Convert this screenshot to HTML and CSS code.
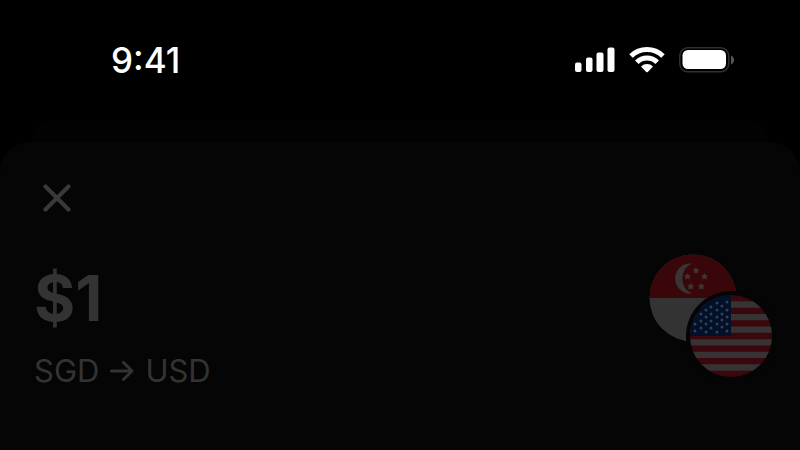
FILE: index.html
```
<!DOCTYPE html>
<html lang="en">

<head>
  <meta charset="UTF-8" />
  <title>Convert SGD to USD</title>
  <meta name="viewport" content="width=device-width, initial-scale=1.0" />
  <link rel="stylesheet" href="styles.css">
</head>

<body>
  <!-- Status bar -->
  <header class="statusbar">
    <time class="clock">9:41</time>
    <div class="indicators">
      <svg width="40" height="26" viewBox="0 0 40 26" fill="#fff" aria-label="Signal">
        <rect x="0" y="15.500" width="6.5" height="9.5" rx="2" />
        <rect x="11" y="10.500" width="6.5" height="14.5" rx="2" />
        <rect x="21.5" y="5.500" width="7" height="19.5" rx="2" />
        <rect x="32.5" y="0.500" width="7" height="24.5" rx="2" />
      </svg>
      <svg width="36" height="26" viewBox="0 0 36 26" fill="none" stroke="#fff" stroke-width="5" aria-label="Wi-Fi">
        <path d="M2 9 A23 23 0 0 1 34 9" />
        <path d="M7.8 15.2 A14.6 14.6 0 0 1 28.2 15.2" />
        <path d="M12 19.4 A8.6 8.6 0 0 1 24 19.4 L18.8 25 Q18 25.6 17.2 25 Z" fill="#fff" stroke="none" />
      </svg>
      <svg width="56" height="26" viewBox="0 0 56 26" aria-label="Battery">
        <rect x="0.75" y="0.75" width="49" height="24" rx="8" fill="none" stroke="#303030" stroke-width="1.5" />
        <rect x="3.5" y="3" width="43.5" height="19" rx="5.5" fill="#fff" />
        <path d="M52 8.5 Q55 10 55 13 Q55 16 52 17.5 Z" fill="#555" />
      </svg>
    </div>
  </header>

  <!-- Sheets -->
  <div class="sheet-back"></div>
  <main class="sheet">
    <button class="close" type="button" aria-label="Close">
      <svg width="28" height="28" viewBox="0 0 28 28" stroke="#393939" stroke-width="4.2" stroke-linecap="round">
        <path d="M2.5 2.5 L25.5 25.5 M25.5 2.5 L2.5 25.5" />
      </svg>
    </button>

    <div class="summary">
      <div>
        <h1>$1</h1>
        <p class="pair">
          SGD
          <svg width="24" height="20" viewBox="0 0 24 20" fill="none" stroke="#333" stroke-width="3" stroke-linecap="round" stroke-linejoin="round" role="img" aria-label="to">
            <path d="M1.5 10 H22 M13.5 1.5 L22 10 L13.5 18.5" />
          </svg>
          USD
        </p>
      </div>

      <div class="flags">
        <svg class="flag-sg" viewBox="0 0 88 88" role="img" aria-label="Singapore">
          <clipPath id="sg"><circle cx="44" cy="44" r="43.5" /></clipPath>
          <g clip-path="url(#sg)">
            <rect width="88" height="88" fill="#333" />
            <rect width="88" height="44" fill="#39070a" />
            <path d="M43 9.5 A15.1 15.1 0 1 0 43 39.5 A16.5 16.5 0 0 1 43 9.5 Z" fill="#3a3535" />
            <g fill="#3d3434">
              <path id="star" d="M47 13 l1.2 2 l2.3 .4 l-1.6 1.7 l.4 2.4 l-2.3 -1.1 l-2.3 1.1 l.4 -2.4 l-1.6 -1.7 l2.3 -.4 Z" />
              <use href="#star" x="-8.5" y="6" />
              <use href="#star" x="8.5" y="6" />
              <use href="#star" x="-5.3" y="16" />
              <use href="#star" x="5.3" y="16" />
            </g>
          </g>
        </svg>
        <svg class="flag-us" viewBox="0 0 90 90" role="img" aria-label="United States">
          <clipPath id="us"><circle cx="45" cy="45" r="41" /></clipPath>
          <circle cx="45" cy="45" r="45" fill="#050505" />
          <g clip-path="url(#us)">
            <rect width="90" height="90" fill="#39070c" />
            <path d="M0 13.5 H90 M0 26.1 H90 M0 38.7 H90 M0 51.3 H90 M0 63.9 H90 M0 76.5 H90" stroke="#353333" stroke-width="6.3" />
            <rect width="45" height="45" fill="#021029" />
            <g fill="#354052">
              <circle cx="41" cy="11" r="1.5" /><circle cx="41" cy="19" r="1.5" />
              <circle cx="41" cy="26" r="1.5" /><circle cx="41" cy="33" r="1.5" />
              <circle cx="41" cy="40" r="1.5" /><circle cx="36" cy="15" r="1.5" />
              <circle cx="36" cy="23" r="1.5" /><circle cx="36" cy="29" r="1.5" />
              <circle cx="36" cy="36" r="1.5" /><circle cx="31" cy="12" r="1.5" />
              <circle cx="31" cy="19" r="1.5" /><circle cx="31" cy="26" r="1.5" />
              <circle cx="31" cy="33" r="1.5" /><circle cx="31" cy="41" r="1.5" />
              <circle cx="25" cy="16" r="1.5" /><circle cx="25" cy="23" r="1.5" />
              <circle cx="25" cy="30" r="1.5" /><circle cx="25" cy="37" r="1.5" />
              <circle cx="20" cy="19" r="1.5" /><circle cx="20" cy="26" r="1.5" />
              <circle cx="20" cy="33" r="1.5" /><circle cx="20" cy="41" r="1.5" />
              <circle cx="15" cy="23" r="1.5" /><circle cx="15" cy="30" r="1.5" />
              <circle cx="15" cy="37" r="1.5" /><circle cx="9" cy="33" r="1.5" />
              <circle cx="9" cy="40" r="1.5" />
            </g>
          </g>
        </svg>
      </div>
    </div>
  </main>
</body>

</html>
```
FILE: styles.css
```
* {
  box-sizing: border-box;
  margin: 0;
  padding: 0;
}

body {
  font-family: Inter, 'Liberation Sans', sans-serif;
  display: flex;
  flex-direction: column;
  min-height: 100vh;
  background-color: #000;
  color: #333;
}

svg {
  display: block;
}

/* Status bar */
.statusbar {
  display: flex;
  justify-content: space-between;
  align-items: center;
  height: 120px;
  padding: 0 65px 0 111px;
}

.clock {
  color: #fff;
  font-size: 35px;
  line-height: 40px;
  font-weight: 500;
}

.indicators {
  display: flex;
  align-items: center;
  gap: 14px;
}

/* Sheets */
.sheet-back {
  height: 22px;
  margin: 0 32px;
  background-color: #020202;
  border-radius: 20px 20px 0 0;
}

.sheet {
  flex: 1;
  padding: 42px 24px 24px 34px;
  background-color: #050505;
  border-radius: 30px 30px 0 0;
}

.close {
  display: block;
  padding: 0 9px;
  background: none;
  border: none;
  cursor: pointer;
}

.summary {
  display: flex;
  justify-content: space-between;
  align-items: flex-start;
  margin-top: 42px;
}

h1 {
  margin-top: 4px;
  font-size: 63px;
  line-height: 80px;
  font-weight: 700;
}

.pair {
  display: flex;
  align-items: center;
  gap: 11px;
  margin-top: 13px;
  font-size: 31px;
  line-height: 40px;
}

.flags {
  display: grid;
}

.flag-sg,
.flag-us {
  grid-area: 1 / 1;
}

.flag-sg {
  width: 88px;
  margin-right: 36px;
}

.flag-us {
  width: 90px;
  margin: 37px 0 0 37px;
}
```
